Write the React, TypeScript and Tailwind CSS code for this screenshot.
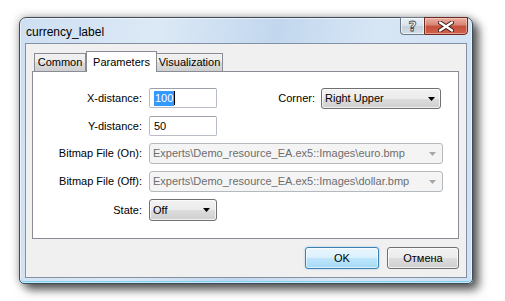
import React from "react";

const Arrow = ({ color }: { color: string }) => (
  <svg width="7" height="4" viewBox="0 0 7 4">
    <path d="M0 0h7L3.5 4z" fill={color} />
  </svg>
);

const Combo = ({ text, w, disabled }: { text: string; w: string; disabled?: boolean }) =>
  disabled ? (
    <div className={`${w} h-[21px] rounded-[3px] border border-[#b4b9bd] bg-[#f4f4f4] flex items-center justify-between pl-[3px] pr-[6px] text-[#6d6d6d]`}>
      <span className="whitespace-nowrap">{text}</span>
      <Arrow color="#a7a7a7" />
    </div>
  ) : (
    <div className={`${w} h-[21px] rounded-[3px] border border-[#707070] bg-[linear-gradient(#f2f2f2_0%,#ebebeb_50%,#dddddd_50%,#cfcfcf_100%)] flex items-center justify-between pl-[3px] pr-[5px] text-black shadow-[inset_0_0_0_1px_rgba(255,255,255,0.7)]`}>
      <span className="whitespace-nowrap">{text}</span>
      <Arrow color="#000" />
    </div>
  );

const TextBox = ({ children }: { children: React.ReactNode }) => (
  <div className="w-[68px] h-[20px] border border-[#b8bcc4] border-t-[#9ba0aa] bg-white flex items-center pl-[4px] rounded-[2px]">
    {children}
  </div>
);

const Label = ({ children, w = "w-[109px]" }: { children: React.ReactNode; w?: string }) => (
  <div className={`${w} text-right whitespace-nowrap text-black`}>{children}</div>
);

export default function App() {
  return (
    <div
      className="w-[505px] h-[301px] bg-white pl-[19px] pt-[17px] overflow-hidden text-[11px] leading-none"
      style={{ fontFamily: '"Liberation Sans", Arial, sans-serif' }}
    >
      <div className="w-[454px] h-[267px] flex flex-col rounded-t-[7px] rounded-b-[5px] border border-[#3f4b59] bg-[linear-gradient(100deg,#cddff2_0%,#dce9f6_28%,#c2d7ee_52%,#d7e6f5_72%,#cfe1f3_100%)] shadow-[0_0_10px_rgba(0,0,0,0.35),6px_6px_10px_rgba(0,0,0,0.6),inset_0_0_0_1px_rgba(255,255,255,0.55),inset_0_-2px_0_#7fd0f3]">
        {/* Title bar */}
        <div className="h-[25px] flex items-start justify-between">
          <div className="pl-[6px] pt-[8px] text-[12px] text-black">currency_label</div>
          <div className="flex mr-[4px] -mt-px">
            <div className="w-[24px] h-[18px] rounded-bl-[4px] border border-[#6d7a89] border-r-0 bg-[linear-gradient(#e8eef5_0%,#d9e2ec_50%,#c5d1de_50%,#d3dde8_100%)] flex items-center justify-center shadow-[inset_0_0_0_1px_rgba(255,255,255,0.6)]">
              <span className="text-[14px] font-bold text-white [-webkit-text-stroke:0.8px_#3c4650]" style={{ fontFamily: '"DejaVu Sans", sans-serif' }}>?</span>
            </div>
            <div className="w-[44px] h-[18px] rounded-br-[4px] border border-[#6b2a22] bg-[linear-gradient(#eab0a4_0%,#d88272_45%,#c5503b_50%,#d0604a_100%)] flex items-center justify-center shadow-[inset_0_0_0_1px_rgba(255,220,210,0.5)]">
              <svg width="16" height="11" viewBox="0 0 16 11">
                <path d="M2 1.5L14 9.5M14 1.5L2 9.5" stroke="#3d1a14" strokeWidth="4.2" strokeLinecap="round" />
                <path d="M2 1.5L14 9.5M14 1.5L2 9.5" stroke="#ffffff" strokeWidth="2.4" strokeLinecap="round" />
              </svg>
            </div>
          </div>
        </div>
        {/* Client */}
        <div className="mx-[5px] h-[235px] border border-[#8391a3] bg-[#f0f0f0] flex flex-col">
          {/* Tabs */}
          <div className="h-[27px] pl-[8px] flex items-end">
            <div className="w-[52px] h-[18px] border border-[#898c95] border-b-0 bg-[linear-gradient(#f2f2f2_0%,#ebebeb_50%,#dddddd_50%,#cfcfcf_100%)] flex items-center justify-center text-black">
              Common
            </div>
            <div className="w-[71px] h-[21px] -mb-px relative z-10 border border-[#898c95] border-b-0 bg-white flex items-start pt-[5px] justify-center text-black">
              Parameters
            </div>
            <div className="w-[67px] h-[18px] -ml-px border border-[#898c95] border-b-0 bg-[linear-gradient(#f2f2f2_0%,#ebebeb_50%,#dddddd_50%,#cfcfcf_100%)] flex items-center justify-center text-black">
              Visualization
            </div>
          </div>
          {/* Panel */}
          <div className="ml-[6px] w-[427px] h-[168px] border border-[#898c95] bg-white pt-[16px] flex flex-col">
            <div className="h-[28px] flex items-start">
              <div className="h-[21px] flex items-center">
                <Label>X-distance:</Label>
              </div>
              <div className="ml-[7px] h-[21px] flex items-start">
                <TextBox>
                  <span className="bg-[#3399ff] text-white px-[1px] py-[2px]">100</span>
                  <span className="w-px h-[14px] bg-black" />
                </TextBox>
              </div>
              <div className="h-[21px] flex items-center">
                <Label w="w-[98px]">Corner:</Label>
              </div>
              <div className="ml-[6px]">
                <Combo text="Right Upper" w="w-[120px]" />
              </div>
            </div>
            <div className="h-[27px] flex items-start">
              <div className="h-[20px] flex items-center">
                <Label>Y-distance:</Label>
              </div>
              <div className="ml-[7px]">
                <TextBox>50</TextBox>
              </div>
            </div>
            <div className="h-[28px] flex items-start">
              <div className="h-[21px] flex items-center">
                <Label>Bitmap File (On):</Label>
              </div>
              <div className="ml-[7px]">
                <Combo text="Experts\Demo_resource_EA.ex5::Images\euro.bmp" w="w-[294px]" disabled />
              </div>
            </div>
            <div className="h-[28px] flex items-start">
              <div className="h-[21px] flex items-center">
                <Label>Bitmap File (Off):</Label>
              </div>
              <div className="ml-[7px]">
                <Combo text="Experts\Demo_resource_EA.ex5::Images\dollar.bmp" w="w-[294px]" disabled />
              </div>
            </div>
            <div className="h-[28px] flex items-start">
              <div className="h-[22px] flex items-center">
                <Label>State:</Label>
              </div>
              <div className="ml-[7px]">
                <div className="w-[68px] h-[22px] rounded-[3px] border border-[#707070] bg-[linear-gradient(#f2f2f2_0%,#ebebeb_50%,#dddddd_50%,#cfcfcf_100%)] flex items-center justify-between pl-[3px] pr-[6px] text-black shadow-[inset_0_0_0_1px_rgba(255,255,255,0.7)]">
                  <span>Off</span>
                  <Arrow color="#000" />
                </div>
              </div>
            </div>
          </div>
          {/* Buttons */}
          <div className="ml-[6px] w-[427px] mt-[8px] flex justify-end gap-[8px]">
            <div className="w-[74px] h-[22px] rounded-[3px] border border-[#3c7fb1] bg-[linear-gradient(#eaf6fd_0%,#d9f0fc_50%,#bee6fd_50%,#a7d9f5_100%)] shadow-[inset_0_0_0_1px_rgba(255,255,255,0.6),0_0_2px_rgba(80,170,230,0.6)] flex items-center justify-center text-black">
              OK
            </div>
            <div className="w-[72px] h-[22px] rounded-[3px] border border-[#707070] bg-[linear-gradient(#f2f2f2_0%,#ebebeb_50%,#dddddd_50%,#cfcfcf_100%)] shadow-[inset_0_0_0_1px_rgba(255,255,255,0.7)] flex items-center justify-center text-black">
              Отмена
            </div>
          </div>
        </div>
      </div>
    </div>
  );
}
